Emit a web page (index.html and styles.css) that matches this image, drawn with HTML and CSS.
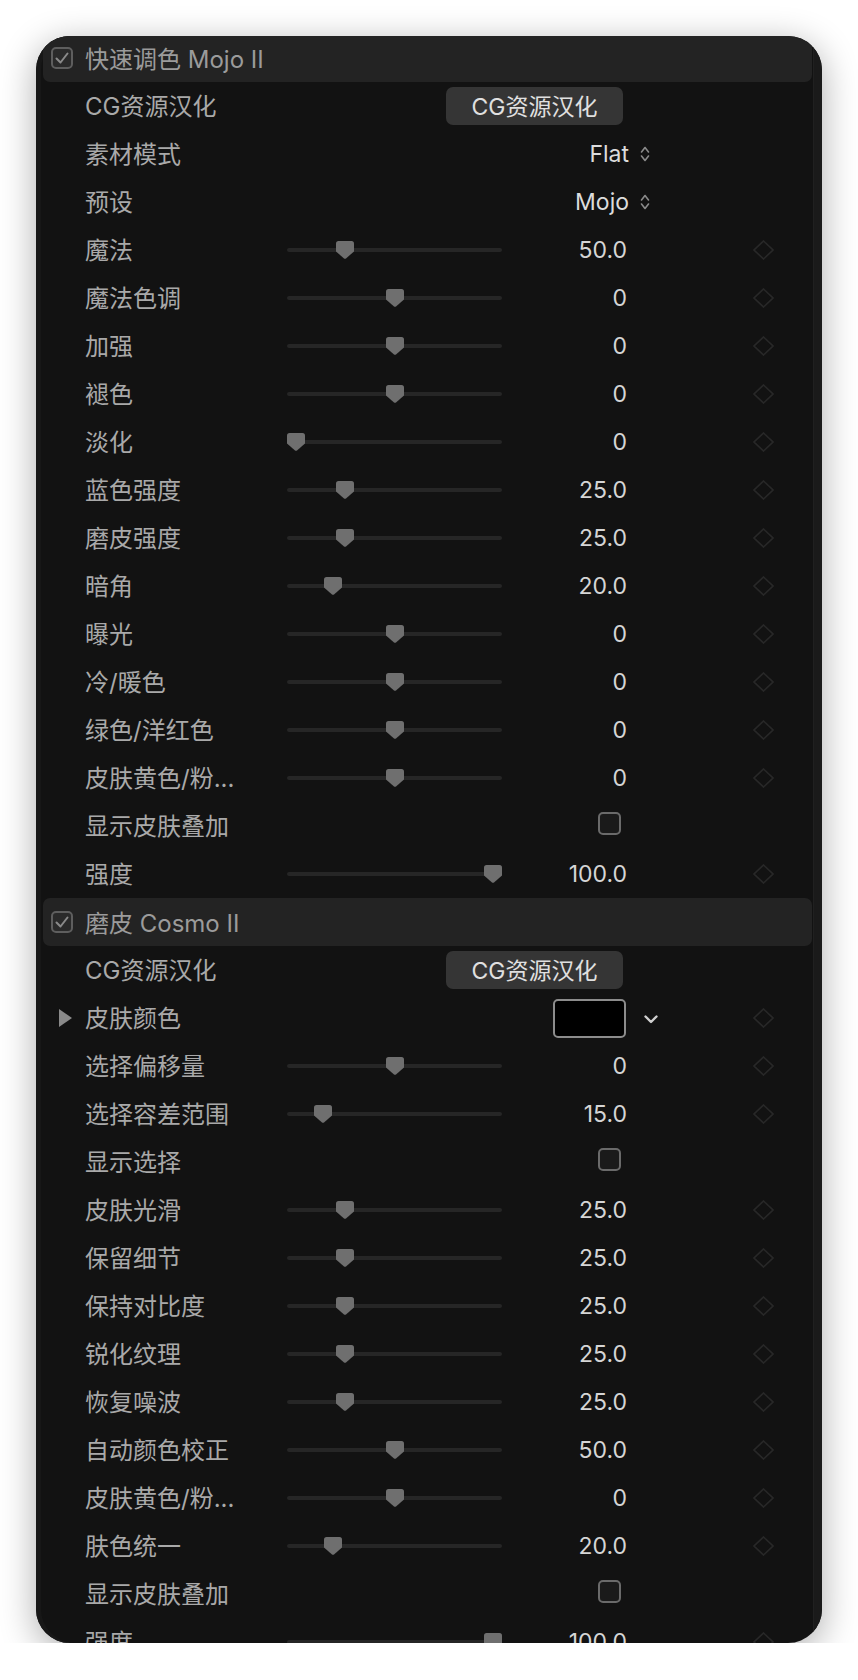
FILE: index.html
```html
<!DOCTYPE html>
<html>
<head>
	<meta charset="utf-8">
	<meta name="viewport" content="width=device-width, initial-scale=1.0">
	<title>Inspector</title>
	<link rel="stylesheet" href="styles.css">
</head>
<body>

<div class="panel">
<div class="list">

	<!-- Mojo II -->
	<div class="group-head"><span class="head-check"><svg width="14" height="12" viewBox="0 0 14 12"><path d="M1.5 6.5 L5.5 10.5 L12.5 1.5" fill="none" stroke="#8a8a8a" stroke-width="2" stroke-linecap="round" stroke-linejoin="round"/></svg></span>快速调色 Mojo II</div>

	<div class="row"><span class="label">CG资源汉化</span><button class="btn">CG资源汉化</button></div>
	<div class="row"><span class="label">素材模式</span><div class="popup"><span class="popup-value">Flat</span><svg class="updown" width="10" height="18" viewBox="0 0 10 18"><path d="M1.5 7 L5 2.5 L8.5 7 M1.5 11 L5 15.5 L8.5 11" fill="none" stroke="#8a8a8a" stroke-width="1.6" stroke-linecap="round" stroke-linejoin="round"/></svg></div></div>
	<div class="row"><span class="label">预设</span><div class="popup"><span class="popup-value">Mojo</span><svg class="updown" width="10" height="18" viewBox="0 0 10 18"><path d="M1.5 7 L5 2.5 L8.5 7 M1.5 11 L5 15.5 L8.5 11" fill="none" stroke="#8a8a8a" stroke-width="1.6" stroke-linecap="round" stroke-linejoin="round"/></svg></div></div>

	<div class="row"><span class="label">魔法</span><div class="slider" style="--f:.25"><svg class="thumb" width="18" height="18" viewBox="0 0 18 18"><path d="M2.5 0 H15.5 Q18 0 18 2.5 V10.5 L10 17.4 Q9 18.2 8 17.4 L0 10.5 V2.5 Q0 0 2.5 0 Z"/></svg></div><span class="value">50.0</span><svg class="key" width="21" height="20" viewBox="0 0 21 20"><path d="M10.5 1 L20 10 L10.5 19 L1 10 Z"/></svg></div>
	<div class="row"><span class="label">魔法色调</span><div class="slider" style="--f:.5"><svg class="thumb" width="18" height="18" viewBox="0 0 18 18"><path d="M2.5 0 H15.5 Q18 0 18 2.5 V10.5 L10 17.4 Q9 18.2 8 17.4 L0 10.5 V2.5 Q0 0 2.5 0 Z"/></svg></div><span class="value">0</span><svg class="key" width="21" height="20" viewBox="0 0 21 20"><path d="M10.5 1 L20 10 L10.5 19 L1 10 Z"/></svg></div>
	<div class="row"><span class="label">加强</span><div class="slider" style="--f:.5"><svg class="thumb" width="18" height="18" viewBox="0 0 18 18"><path d="M2.5 0 H15.5 Q18 0 18 2.5 V10.5 L10 17.4 Q9 18.2 8 17.4 L0 10.5 V2.5 Q0 0 2.5 0 Z"/></svg></div><span class="value">0</span><svg class="key" width="21" height="20" viewBox="0 0 21 20"><path d="M10.5 1 L20 10 L10.5 19 L1 10 Z"/></svg></div>
	<div class="row"><span class="label">褪色</span><div class="slider" style="--f:.5"><svg class="thumb" width="18" height="18" viewBox="0 0 18 18"><path d="M2.5 0 H15.5 Q18 0 18 2.5 V10.5 L10 17.4 Q9 18.2 8 17.4 L0 10.5 V2.5 Q0 0 2.5 0 Z"/></svg></div><span class="value">0</span><svg class="key" width="21" height="20" viewBox="0 0 21 20"><path d="M10.5 1 L20 10 L10.5 19 L1 10 Z"/></svg></div>
	<div class="row"><span class="label">淡化</span><div class="slider" style="--f:0"><svg class="thumb" width="18" height="18" viewBox="0 0 18 18"><path d="M2.5 0 H15.5 Q18 0 18 2.5 V10.5 L10 17.4 Q9 18.2 8 17.4 L0 10.5 V2.5 Q0 0 2.5 0 Z"/></svg></div><span class="value">0</span><svg class="key" width="21" height="20" viewBox="0 0 21 20"><path d="M10.5 1 L20 10 L10.5 19 L1 10 Z"/></svg></div>
	<div class="row"><span class="label">蓝色强度</span><div class="slider" style="--f:.25"><svg class="thumb" width="18" height="18" viewBox="0 0 18 18"><path d="M2.5 0 H15.5 Q18 0 18 2.5 V10.5 L10 17.4 Q9 18.2 8 17.4 L0 10.5 V2.5 Q0 0 2.5 0 Z"/></svg></div><span class="value">25.0</span><svg class="key" width="21" height="20" viewBox="0 0 21 20"><path d="M10.5 1 L20 10 L10.5 19 L1 10 Z"/></svg></div>
	<div class="row"><span class="label">磨皮强度</span><div class="slider" style="--f:.25"><svg class="thumb" width="18" height="18" viewBox="0 0 18 18"><path d="M2.5 0 H15.5 Q18 0 18 2.5 V10.5 L10 17.4 Q9 18.2 8 17.4 L0 10.5 V2.5 Q0 0 2.5 0 Z"/></svg></div><span class="value">25.0</span><svg class="key" width="21" height="20" viewBox="0 0 21 20"><path d="M10.5 1 L20 10 L10.5 19 L1 10 Z"/></svg></div>
	<div class="row"><span class="label">暗角</span><div class="slider" style="--f:.19"><svg class="thumb" width="18" height="18" viewBox="0 0 18 18"><path d="M2.5 0 H15.5 Q18 0 18 2.5 V10.5 L10 17.4 Q9 18.2 8 17.4 L0 10.5 V2.5 Q0 0 2.5 0 Z"/></svg></div><span class="value">20.0</span><svg class="key" width="21" height="20" viewBox="0 0 21 20"><path d="M10.5 1 L20 10 L10.5 19 L1 10 Z"/></svg></div>
	<div class="row"><span class="label">曝光</span><div class="slider" style="--f:.5"><svg class="thumb" width="18" height="18" viewBox="0 0 18 18"><path d="M2.5 0 H15.5 Q18 0 18 2.5 V10.5 L10 17.4 Q9 18.2 8 17.4 L0 10.5 V2.5 Q0 0 2.5 0 Z"/></svg></div><span class="value">0</span><svg class="key" width="21" height="20" viewBox="0 0 21 20"><path d="M10.5 1 L20 10 L10.5 19 L1 10 Z"/></svg></div>
	<div class="row"><span class="label">冷/暖色</span><div class="slider" style="--f:.5"><svg class="thumb" width="18" height="18" viewBox="0 0 18 18"><path d="M2.5 0 H15.5 Q18 0 18 2.5 V10.5 L10 17.4 Q9 18.2 8 17.4 L0 10.5 V2.5 Q0 0 2.5 0 Z"/></svg></div><span class="value">0</span><svg class="key" width="21" height="20" viewBox="0 0 21 20"><path d="M10.5 1 L20 10 L10.5 19 L1 10 Z"/></svg></div>
	<div class="row"><span class="label">绿色/洋红色</span><div class="slider" style="--f:.5"><svg class="thumb" width="18" height="18" viewBox="0 0 18 18"><path d="M2.5 0 H15.5 Q18 0 18 2.5 V10.5 L10 17.4 Q9 18.2 8 17.4 L0 10.5 V2.5 Q0 0 2.5 0 Z"/></svg></div><span class="value">0</span><svg class="key" width="21" height="20" viewBox="0 0 21 20"><path d="M10.5 1 L20 10 L10.5 19 L1 10 Z"/></svg></div>
	<div class="row"><span class="label">皮肤黄色/粉...</span><div class="slider" style="--f:.5"><svg class="thumb" width="18" height="18" viewBox="0 0 18 18"><path d="M2.5 0 H15.5 Q18 0 18 2.5 V10.5 L10 17.4 Q9 18.2 8 17.4 L0 10.5 V2.5 Q0 0 2.5 0 Z"/></svg></div><span class="value">0</span><svg class="key" width="21" height="20" viewBox="0 0 21 20"><path d="M10.5 1 L20 10 L10.5 19 L1 10 Z"/></svg></div>
	<div class="row"><span class="label">显示皮肤叠加</span><span class="box"></span></div>
	<div class="row"><span class="label">强度</span><div class="slider" style="--f:1"><svg class="thumb" width="18" height="18" viewBox="0 0 18 18"><path d="M2.5 0 H15.5 Q18 0 18 2.5 V10.5 L10 17.4 Q9 18.2 8 17.4 L0 10.5 V2.5 Q0 0 2.5 0 Z"/></svg></div><span class="value">100.0</span><svg class="key" width="21" height="20" viewBox="0 0 21 20"><path d="M10.5 1 L20 10 L10.5 19 L1 10 Z"/></svg></div>

	<!-- Cosmo II -->
	<div class="group-head"><span class="head-check"><svg width="14" height="12" viewBox="0 0 14 12"><path d="M1.5 6.5 L5.5 10.5 L12.5 1.5" fill="none" stroke="#8a8a8a" stroke-width="2" stroke-linecap="round" stroke-linejoin="round"/></svg></span>磨皮 Cosmo II</div>

	<div class="row"><span class="label">CG资源汉化</span><button class="btn">CG资源汉化</button></div>
	<div class="row"><span class="disclosure"></span><span class="label">皮肤颜色</span><div class="color-well"><span class="swatch"></span><svg class="drop" width="14" height="9" viewBox="0 0 14 9"><path d="M1.5 1.5 L7 7 L12.5 1.5" fill="none" stroke="#cfcfcf" stroke-width="2.4" stroke-linecap="round" stroke-linejoin="round"/></svg></div><svg class="key" width="21" height="20" viewBox="0 0 21 20"><path d="M10.5 1 L20 10 L10.5 19 L1 10 Z"/></svg></div>
	<div class="row"><span class="label">选择偏移量</span><div class="slider" style="--f:.5"><svg class="thumb" width="18" height="18" viewBox="0 0 18 18"><path d="M2.5 0 H15.5 Q18 0 18 2.5 V10.5 L10 17.4 Q9 18.2 8 17.4 L0 10.5 V2.5 Q0 0 2.5 0 Z"/></svg></div><span class="value">0</span><svg class="key" width="21" height="20" viewBox="0 0 21 20"><path d="M10.5 1 L20 10 L10.5 19 L1 10 Z"/></svg></div>
	<div class="row"><span class="label">选择容差范围</span><div class="slider" style="--f:.135"><svg class="thumb" width="18" height="18" viewBox="0 0 18 18"><path d="M2.5 0 H15.5 Q18 0 18 2.5 V10.5 L10 17.4 Q9 18.2 8 17.4 L0 10.5 V2.5 Q0 0 2.5 0 Z"/></svg></div><span class="value">15.0</span><svg class="key" width="21" height="20" viewBox="0 0 21 20"><path d="M10.5 1 L20 10 L10.5 19 L1 10 Z"/></svg></div>
	<div class="row"><span class="label">显示选择</span><span class="box"></span></div>
	<div class="row"><span class="label">皮肤光滑</span><div class="slider" style="--f:.25"><svg class="thumb" width="18" height="18" viewBox="0 0 18 18"><path d="M2.5 0 H15.5 Q18 0 18 2.5 V10.5 L10 17.4 Q9 18.2 8 17.4 L0 10.5 V2.5 Q0 0 2.5 0 Z"/></svg></div><span class="value">25.0</span><svg class="key" width="21" height="20" viewBox="0 0 21 20"><path d="M10.5 1 L20 10 L10.5 19 L1 10 Z"/></svg></div>
	<div class="row"><span class="label">保留细节</span><div class="slider" style="--f:.25"><svg class="thumb" width="18" height="18" viewBox="0 0 18 18"><path d="M2.5 0 H15.5 Q18 0 18 2.5 V10.5 L10 17.4 Q9 18.2 8 17.4 L0 10.5 V2.5 Q0 0 2.5 0 Z"/></svg></div><span class="value">25.0</span><svg class="key" width="21" height="20" viewBox="0 0 21 20"><path d="M10.5 1 L20 10 L10.5 19 L1 10 Z"/></svg></div>
	<div class="row"><span class="label">保持对比度</span><div class="slider" style="--f:.25"><svg class="thumb" width="18" height="18" viewBox="0 0 18 18"><path d="M2.5 0 H15.5 Q18 0 18 2.5 V10.5 L10 17.4 Q9 18.2 8 17.4 L0 10.5 V2.5 Q0 0 2.5 0 Z"/></svg></div><span class="value">25.0</span><svg class="key" width="21" height="20" viewBox="0 0 21 20"><path d="M10.5 1 L20 10 L10.5 19 L1 10 Z"/></svg></div>
	<div class="row"><span class="label">锐化纹理</span><div class="slider" style="--f:.25"><svg class="thumb" width="18" height="18" viewBox="0 0 18 18"><path d="M2.5 0 H15.5 Q18 0 18 2.5 V10.5 L10 17.4 Q9 18.2 8 17.4 L0 10.5 V2.5 Q0 0 2.5 0 Z"/></svg></div><span class="value">25.0</span><svg class="key" width="21" height="20" viewBox="0 0 21 20"><path d="M10.5 1 L20 10 L10.5 19 L1 10 Z"/></svg></div>
	<div class="row"><span class="label">恢复噪波</span><div class="slider" style="--f:.25"><svg class="thumb" width="18" height="18" viewBox="0 0 18 18"><path d="M2.5 0 H15.5 Q18 0 18 2.5 V10.5 L10 17.4 Q9 18.2 8 17.4 L0 10.5 V2.5 Q0 0 2.5 0 Z"/></svg></div><span class="value">25.0</span><svg class="key" width="21" height="20" viewBox="0 0 21 20"><path d="M10.5 1 L20 10 L10.5 19 L1 10 Z"/></svg></div>
	<div class="row"><span class="label">自动颜色校正</span><div class="slider" style="--f:.5"><svg class="thumb" width="18" height="18" viewBox="0 0 18 18"><path d="M2.5 0 H15.5 Q18 0 18 2.5 V10.5 L10 17.4 Q9 18.2 8 17.4 L0 10.5 V2.5 Q0 0 2.5 0 Z"/></svg></div><span class="value">50.0</span><svg class="key" width="21" height="20" viewBox="0 0 21 20"><path d="M10.5 1 L20 10 L10.5 19 L1 10 Z"/></svg></div>
	<div class="row"><span class="label">皮肤黄色/粉...</span><div class="slider" style="--f:.5"><svg class="thumb" width="18" height="18" viewBox="0 0 18 18"><path d="M2.5 0 H15.5 Q18 0 18 2.5 V10.5 L10 17.4 Q9 18.2 8 17.4 L0 10.5 V2.5 Q0 0 2.5 0 Z"/></svg></div><span class="value">0</span><svg class="key" width="21" height="20" viewBox="0 0 21 20"><path d="M10.5 1 L20 10 L10.5 19 L1 10 Z"/></svg></div>
	<div class="row"><span class="label">肤色统一</span><div class="slider" style="--f:.19"><svg class="thumb" width="18" height="18" viewBox="0 0 18 18"><path d="M2.5 0 H15.5 Q18 0 18 2.5 V10.5 L10 17.4 Q9 18.2 8 17.4 L0 10.5 V2.5 Q0 0 2.5 0 Z"/></svg></div><span class="value">20.0</span><svg class="key" width="21" height="20" viewBox="0 0 21 20"><path d="M10.5 1 L20 10 L10.5 19 L1 10 Z"/></svg></div>
	<div class="row"><span class="label">显示皮肤叠加</span><span class="box"></span></div>
	<div class="row"><span class="label">强度</span><div class="slider" style="--f:1"><svg class="thumb" width="18" height="18" viewBox="0 0 18 18"><path d="M2.5 0 H15.5 Q18 0 18 2.5 V10.5 L10 17.4 Q9 18.2 8 17.4 L0 10.5 V2.5 Q0 0 2.5 0 Z"/></svg></div><span class="value">100.0</span><svg class="key" width="21" height="20" viewBox="0 0 21 20"><path d="M10.5 1 L20 10 L10.5 19 L1 10 Z"/></svg></div>

</div>
<div class="scroll-track"></div>
</div>

</body>
</html>
```

FILE: styles.css
```css
html,
body {
	margin: 0;
	background: #ffffff;
	font-family: Inter, "Noto Sans CJK SC", sans-serif;
}

.panel {
	display: flex;
	width: 786px;
	height: 1607px;
	margin: 36px 0 0 36px;
	border-radius: 34px;
	overflow: hidden;
	background: #121212;
	box-shadow: 0 8px 36px rgba(0, 0, 0, .33), inset 5px 0 0 #171717;
}

.list {
	flex: 1;
	margin-top: -2px;
}

.scroll-track {
	width: 9px;
	background: #1a1a1a;
	border-left: 1px solid #202020;
	box-sizing: border-box;
}

/* group header */
.group-head {
	display: flex;
	align-items: center;
	height: 48px;
	margin: 0 1px 0 7px;
	padding: 0 0 1px 8px;
	box-sizing: border-box;
	border-radius: 7px;
	background: #232323;
	color: #9b9b9b;
	font-size: 24px;
}

.head-check {
	display: flex;
	align-items: center;
	justify-content: center;
	width: 22px;
	height: 22px;
	margin: 0 12px 0 0;
	border: 2px solid #5e5e5e;
	border-radius: 5px;
	box-sizing: border-box;
	background: #2a2a2a;
}

/* parameter rows */
.row {
	display: grid;
	grid-template-columns: 49px 202px 215px 125px 126px 21px 1fr;
	align-items: center;
	height: 48px;
}

.label {
	grid-column: 2;
	margin-bottom: 4px;
	color: #a9a9a9;
	font-size: 24px;
	white-space: nowrap;
}

.disclosure {
	grid-column: 1;
	grid-row: 1;
	justify-self: end;
	width: 0;
	height: 0;
	margin-right: 13px;
	border-left: 13px solid #8a8a8a;
	border-top: 9px solid transparent;
	border-bottom: 9px solid transparent;
}

.slider {
	grid-column: 3;
	position: relative;
	height: 18px;
}

.slider::before {
	content: '';
	position: absolute;
	left: 0;
	right: 0;
	top: 7px;
	height: 4px;
	border-radius: 2px;
	background: #262626;
}

.thumb {
	position: absolute;
	top: 0;
	left: calc(var(--f) * 197px);
	fill: #6f6f6f;
}

.value {
	grid-column: 4;
	text-align: right;
	color: #d5d5d5;
	font-size: 23px;
}

.key {
	grid-column: 6;
	fill: none;
	stroke: #282828;
	stroke-width: 1.6;
}

.btn {
	grid-column: 3 / 5;
	justify-self: end;
	width: 177px;
	height: 38px;
	margin-right: 4px;
	border: none;
	border-radius: 7px;
	background: #353535;
	color: #e0e0e0;
	font-family: Inter, "Noto Sans CJK SC", sans-serif;
	font-size: 23px;
	font-weight: 400;
	padding: 0 0 2px;
}

.popup {
	grid-column: 4 / 6;
	display: flex;
	align-items: center;
}

.popup-value {
	width: 127px;
	text-align: right;
	color: #dcdcdc;
	font-size: 23px;
}

.updown {
	margin-left: 11px;
}

.box {
	grid-column: 4;
	justify-self: end;
	width: 23px;
	height: 23px;
	margin: 0 6px 6px 0;
	border: 2px solid #6a6a6a;
	border-radius: 5px;
	box-sizing: border-box;
	background: #1a1a1a;
}

.color-well {
	grid-column: 4 / 6;
	display: flex;
	align-items: center;
}

.swatch {
	width: 73px;
	height: 39px;
	margin-left: 51px;
	border: 2px solid #8c8c8c;
	border-radius: 5px;
	box-sizing: border-box;
	background: #000;
}

.drop {
	margin-left: 18px;
	margin-top: 2px;
}
```
